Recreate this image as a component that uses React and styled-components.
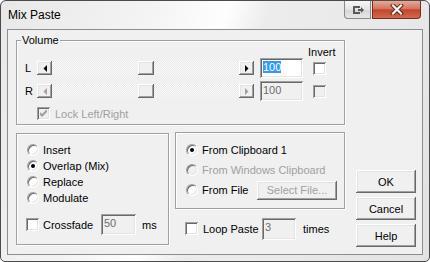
import styled, { createGlobalStyle } from "styled-components";

const GlobalStyle = createGlobalStyle`
  html, body {
    margin: 0;
    padding: 0;
    background: #fff;
  }
  body {
    font-family: "Liberation Sans", Arial, sans-serif;
    font-size: 11px;
    color: #000;
  }
  * {
    box-sizing: border-box;
  }
`;

const raised = `
  background: #f0f0f0;
  box-shadow: inset -1px -1px #696969, inset 1px 1px #fff,
    inset -2px -2px #a0a0a0, inset 2px 2px #e3e3e3;
`;

const sunken = `
  box-shadow: inset 1px 1px #a0a0a0, inset -1px -1px #fff,
    inset 2px 2px #696969, inset -2px -2px #e3e3e3;
`;

const etched = `
  border: 1px solid #a0a0a0;
  box-shadow: inset 1px 1px #fff, 1px 1px #fff;
`;

const Window = styled.div`
  width: 430px;
  height: 262px;
  display: flex;
  flex-direction: column;
  padding: 0 6px 6px 6px;
  border: 1px solid #4b4b4b;
  border-radius: 6px 6px 5px 5px;
  background: linear-gradient(110deg, #e8e8e8 0%, #f4f4f4 30%, #fefefe 44%, #ececec 52%, #e9e9e9 75%, #e2e2e2 100%);
`;

const TitleBar = styled.div`
  height: 28px;
  display: flex;
  align-items: flex-start;
  justify-content: space-between;
`;

const Title = styled.div`
  margin: 7px 0 0 1px;
  font-size: 12px;
  line-height: 14px;
`;

const CaptionButtons = styled.div`
  display: flex;
  gap: 1px;
  margin-right: 2px;
`;

const PinButton = styled.div`
  width: 27px;
  height: 18px;
  border: 1px solid #8a8a8a;
  border-top: none;
  border-radius: 0 0 0 4px;
  background: linear-gradient(#f7f7f7, #e4e4e4 50%, #d6d6d6 51%, #e6e6e6);
  display: flex;
  align-items: center;
  justify-content: center;
`;

const CloseButton = styled.div`
  width: 49px;
  height: 18px;
  border: 1px solid #7a2a1e;
  border-top: none;
  border-radius: 0 0 4px 0;
  background: linear-gradient(#e9a99a, #d57560 45%, #c4442c 52%, #cf6a50 100%);
  display: flex;
  align-items: center;
  justify-content: center;
`;

const Client = styled.div`
  flex: 1;
  display: flex;
  border: 1px solid #8b8d92;
  background: #f0f0f0;
  padding: 4px 0 0 8px;
`;

const MainColumn = styled.div`
  width: 329px;
  display: flex;
  flex-direction: column;
`;

const GroupBox = styled.fieldset`
  margin: 0;
  padding: 0 0 4px 0;
  min-width: 0;
  ${etched}
`;

const Legend = styled.legend`
  margin-left: 4px;
  padding: 0 1px;
  line-height: 13px;
  background: #f0f0f0;
`;

const HeaderRow = styled.div`
  height: 11px;
  line-height: 11px;
  padding-left: 291px;
`;

const ChannelRow = styled.div`
  height: 20px;
  display: flex;
  align-items: center;
  margin-bottom: 3px;
`;

const ChannelLabel = styled.span`
  width: 12px;
  margin-left: 8px;
  color: ${(p) => (p.$disabled ? "#6d6d6d" : "#000")};
`;

const ScrollBar = styled.div`
  width: 217px;
  height: 14px;
  display: flex;
`;

const ScrollArrow = styled.div`
  width: 15px;
  height: 14px;
  ${raised}
  display: flex;
  align-items: center;
  justify-content: center;
`;

const Track = styled.div`
  flex: 1;
  display: flex;
  background-color: #fbfbfb;
  background-image: repeating-conic-gradient(#e8e8e8 0% 25%, transparent 0% 50%);
  background-size: 2px 2px;
`;

const Thumb = styled.div`
  width: 16px;
  height: 14px;
  margin-left: ${(p) => p.$pos}px;
  ${raised}
`;

const EditBox = styled.div`
  width: ${(p) => p.$w}px;
  height: ${(p) => p.$h}px;
  margin-left: ${(p) => p.$ml || 0}px;
  padding: 3px 0 0 3px;
  line-height: 13px;
  background: ${(p) => (p.$disabled ? "#f0f0f0" : "#fff")};
  color: ${(p) => (p.$disabled ? "#6d6d6d" : "#000")};
  ${sunken}
`;

const Selection = styled.span`
  background: #3399ff;
  color: #fff;
`;

const CheckBox = styled.div`
  width: 13px;
  height: 13px;
  flex: none;
  margin-left: ${(p) => p.$ml || 0}px;
  background: ${(p) => (p.$disabled ? "#f0f0f0" : "#fff")};
  ${sunken}
  display: flex;
  align-items: center;
  justify-content: center;
`;

const LockRow = styled.div`
  height: 13px;
  margin-top: 6px;
  padding-left: 20px;
  display: flex;
  align-items: center;
  gap: 5px;
`;

const Caption = styled.span`
  flex: none;
  width: ${(p) => (p.$w ? `${p.$w}px` : "auto")};
  margin-left: ${(p) => p.$ml || 0}px;
  color: ${(p) => (p.$disabled ? "#a0a0a0" : "#000")};
  white-space: nowrap;
`;

const BottomRow = styled.div`
  display: flex;
  align-items: flex-start;
  gap: 6px;
  margin-top: 8px;
`;

const OptionsPanel = styled.div`
  width: 153px;
  height: 112px;
  padding: 8px 0 0 9px;
  ${etched}
`;

const SourceColumn = styled.div`
  width: 170px;
  margin-top: -1px;
`;

const SourcePanel = styled.div`
  height: 77px;
  padding: 9px 0 0 10px;
  display: flex;
  flex-direction: column;
  gap: 4px;
  ${etched}
`;

const RadioRow = styled.div`
  height: 16px;
  display: flex;
  align-items: center;
  gap: 4px;
  margin-left: ${(p) => p.$ml || 0}px;
`;

const Radio = styled.div`
  width: 12px;
  height: 12px;
  flex: none;
  border-radius: 50%;
  border: 1px solid;
  border-color: #a0a0a0 #ffffff #ffffff #a0a0a0;
  box-shadow: inset 1px 1px #696969, inset -1px -1px #e3e3e3;
  background: ${(p) => (p.$disabled ? "#f0f0f0" : "#fff")};
  display: flex;
  align-items: center;
  justify-content: center;

  &::after {
    content: "";
    width: 4px;
    height: 4px;
    border-radius: 50%;
    background: ${(p) => (p.$checked ? "#000" : "transparent")};
  }
`;

const InputRow = styled.div`
  height: 21px;
  display: flex;
  align-items: center;
  gap: 4px;
  margin-top: ${(p) => p.$mt}px;
  padding-left: ${(p) => p.$pl || 0}px;
`;

const PushButton = styled.div`
  width: ${(p) => p.$w}px;
  height: ${(p) => p.$h}px;
  ${raised}
  display: flex;
  align-items: center;
  justify-content: center;
  color: ${(p) => (p.$disabled ? "#a0a0a0" : "#000")};
`;

const ButtonColumn = styled.div`
  margin-left: 11px;
  display: flex;
  flex-direction: column;
  justify-content: flex-end;
  gap: 4px;
  padding-bottom: 7px;
`;

function Arrow({ dir, disabled }) {
  const d = dir === "left" ? "M4 0v7L0.5 3.5z" : "M0 0v7l3.5-3.5z";
  return (
    <svg width="4" height="7" viewBox="0 0 4 7">
      <path d={d} fill={disabled ? "#a0a0a0" : "#000"} />
    </svg>
  );
}

function Check({ disabled }) {
  return (
    <svg width="7" height="7" viewBox="0 0 7 7">
      <path d="M0 2l2 2 5-5v3L2 7 0 5z" fill={disabled ? "#a0a0a0" : "#000"} />
    </svg>
  );
}

function Channel({ name, disabled, value }) {
  return (
    <ChannelRow>
      <ChannelLabel>{name}</ChannelLabel>
      <ScrollBar>
        <ScrollArrow>
          <Arrow dir="left" disabled={disabled} />
        </ScrollArrow>
        <Track>
          <Thumb $pos={86} />
        </Track>
        <ScrollArrow>
          <Arrow dir="right" disabled={disabled} />
        </ScrollArrow>
      </ScrollBar>
      <EditBox $w={43} $h={20} $ml={6} $disabled={disabled}>
        {disabled ? value : <Selection>{value}</Selection>}
      </EditBox>
      <CheckBox $ml={10} $disabled={disabled} />
    </ChannelRow>
  );
}

export default function App() {
  return (
    <>
      <GlobalStyle />
      <Window>
        <TitleBar>
          <Title>Mix Paste</Title>
          <CaptionButtons>
            <PinButton>
              <svg width="12" height="10" viewBox="0 0 12 10">
                <path d="M1 1h7v2H3v4h5v2H1z" fill="#5a5a5a" />
                <path d="M6 4h3V2l3 3-3 3V6H6z" fill="#5a5a5a" />
              </svg>
            </PinButton>
            <CloseButton>
              <svg width="14" height="11" viewBox="0 0 14 11">
                <path d="M3 1.5l8 8M11 1.5l-8 8" stroke="#5b2016" strokeWidth="4" strokeLinecap="square" />
                <path d="M3 1.5l8 8M11 1.5l-8 8" stroke="#fff" strokeWidth="2.2" strokeLinecap="square" />
              </svg>
            </CloseButton>
          </CaptionButtons>
        </TitleBar>
        <Client>
          <MainColumn>
            <GroupBox>
              <Legend>Volume</Legend>
              <HeaderRow>Invert</HeaderRow>
              <Channel name="L" value="100" />
              <Channel name="R" value="100" disabled />
              <LockRow>
                <CheckBox $disabled>
                  <Check disabled />
                </CheckBox>
                <Caption $disabled>Lock Left/Right</Caption>
              </LockRow>
            </GroupBox>
            <BottomRow>
              <OptionsPanel>
                <RadioRow $ml={1}>
                  <Radio />
                  <Caption>Insert</Caption>
                </RadioRow>
                <RadioRow $ml={1}>
                  <Radio $checked />
                  <Caption>Overlap (Mix)</Caption>
                </RadioRow>
                <RadioRow $ml={1}>
                  <Radio />
                  <Caption>Replace</Caption>
                </RadioRow>
                <RadioRow $ml={1}>
                  <Radio />
                  <Caption>Modulate</Caption>
                </RadioRow>
                <InputRow $mt={8}>
                  <CheckBox />
                  <Caption $w={54}>Crossfade</Caption>
                  <EditBox $w={35} $h={21} $disabled>50</EditBox>
                  <Caption $ml={2}>ms</Caption>
                </InputRow>
              </OptionsPanel>
              <SourceColumn>
                <SourcePanel>
                  <RadioRow>
                    <Radio $checked />
                    <Caption>From Clipboard 1</Caption>
                  </RadioRow>
                  <RadioRow>
                    <Radio $disabled />
                    <Caption $disabled>From Windows Clipboard</Caption>
                  </RadioRow>
                  <RadioRow>
                    <Radio />
                    <Caption $w={51}>From File</Caption>
                    <PushButton $w={80} $h={19} $disabled>Select File...</PushButton>
                  </RadioRow>
                </SourcePanel>
                <InputRow $mt={9} $pl={10}>
                  <CheckBox />
                  <Caption $w={55} $ml={1}>Loop Paste</Caption>
                  <EditBox $w={34} $h={22} $disabled>3</EditBox>
                  <Caption $ml={3}>times</Caption>
                </InputRow>
              </SourceColumn>
            </BottomRow>
          </MainColumn>
          <ButtonColumn>
            <PushButton $w={60} $h={23}>OK</PushButton>
            <PushButton $w={60} $h={23}>Cancel</PushButton>
            <PushButton $w={60} $h={23}>Help</PushButton>
          </ButtonColumn>
        </Client>
      </Window>
    </>
  );
}
